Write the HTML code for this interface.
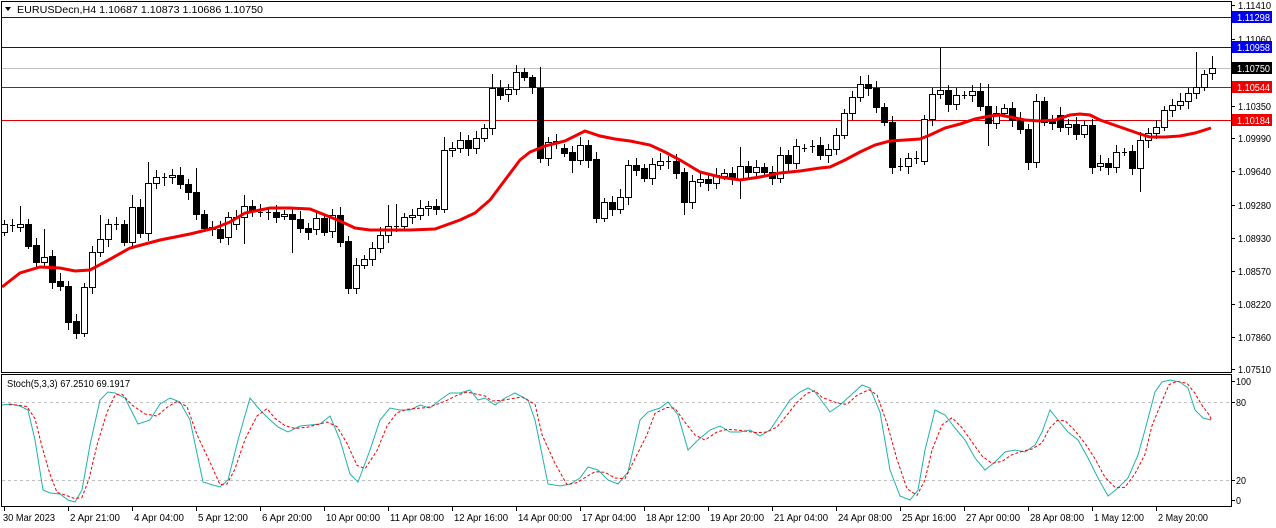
<!DOCTYPE html>
<html><head><meta charset="utf-8"><style>
html,body{margin:0;padding:0;background:#fff;width:1276px;height:528px;overflow:hidden}
svg{display:block;font-family:"Liberation Sans",Tahoma,sans-serif;font-size:10px}
</style></head><body>
<svg id="s" width="1276" height="528" xmlns="http://www.w3.org/2000/svg">
<rect width="1276" height="528" fill="#fff"/>
<g id="lines">
<line x1="2" y1="17.5" x2="1231" y2="17.5" stroke="#0000ff"/>
<line x1="2" y1="47.5" x2="1231" y2="47.5" stroke="#0000ff"/>
<line x1="2" y1="68.5" x2="1231" y2="68.5" stroke="#c0c0c0"/>
<line x1="2" y1="87.5" x2="1231" y2="87.5" stroke="#e00000"/>
<line x1="2" y1="120.5" x2="1231" y2="120.5" stroke="#e00000"/>
<line x1="2" y1="402.5" x2="1231" y2="402.5" stroke="#c0c0c0" stroke-dasharray="3,3"/>
<line x1="2" y1="480.5" x2="1231" y2="480.5" stroke="#c0c0c0" stroke-dasharray="3,3"/>
</g>
<g id="candles"></g>
<polyline id="ma" fill="none" stroke="#f00000" stroke-width="3"/>
<polyline id="st" fill="none" stroke="#20b2aa" stroke-width="1"/>
<polyline id="sg" fill="none" stroke="#f00000" stroke-width="1" stroke-dasharray="3,2"/>
<rect x="1.5" y="1.5" width="1230" height="371" fill="none" stroke="#000"/>
<rect x="1.5" y="374.5" width="1230" height="132" fill="none" stroke="#000"/>
<path d="M5 7 L11 7 L8 11 Z" fill="#000"/>
<text x="17" y="13" textLength="246" lengthAdjust="spacingAndGlyphs">EURUSDecn,H4  1.10687 1.10873 1.10686 1.10750</text>
<text x="7" y="387" textLength="123" lengthAdjust="spacingAndGlyphs">Stoch(5,3,3) 67.2510 69.1917</text>
<g id="axis"></g>
<g id="time"></g>
</svg>
<script>
var NS="http://www.w3.org/2000/svg";
function el(t,a,p,txt){var e=document.createElementNS(NS,t);for(var k in a)e.setAttribute(k,a[k]);if(txt!=null)e.textContent=txt;(p||document.getElementById('s')).appendChild(e);return e;}
var C=[[232,224],[225,225],[227,224,206],[224,246,0,249],[245,262],[262,257,229],[256,282],[281,286],[286,322],[321,333],[333,287],[287,252],[252,239,215],[239,224],[224,224],[224,242],[242,207,195],[207,233],[233,183,162],[183,177],[177,177,173,186],[177,175],[175,184],[184,192],[192,214,168],[214,228],[227,229],[229,238],[237,217],[224,217],[217,206,195,244],[206,210],[212,212],[212,212],[212,217],[216,214],[214,219,0,253],[219,228],[228,232],
[229,218],[218,232],[231,215],[215,242],[241,288,0,294],[288,265],[265,259],[259,248],[248,235],[235,226,205],[226,226,204],[226,217],[217,215],[215,208],[208,206],[206,209],[209,150,137],[150,148],[148,140],[140,148],[148,138],[138,128],[128,88,74],[88,95],[94,89],[89,72],[72,77],[77,87,75],[88,158,67],[158,142],[141,143],[148,153],[152,160,0,173],[160,145],[145,160],[159,218,0,223],[218,202],[202,209],
[209,197],[197,165],[165,170],[168,178],[178,164],[165,161],[161,161],[161,173],[172,202,0,215],[202,181],[182,179],[179,183],[183,175],[176,173],[173,178],[179,166,147,199],[166,172],[172,167],[167,172],[172,178],[178,155],[155,163],[163,146],[148,148],[146,146],[145,155],[155,149],[149,135],[135,113],[113,97],[97,84],[84,88,75],[88,107],[107,122],[122,167],[166,166],[166,158],[158,158],
[161,119],[119,94],[94,90,48],[90,104],[104,95],[95,95],[95,91],[91,106],[106,123,84,146],[123,113],[113,108],[108,120],[120,129],[129,162],[162,101],[101,122],[121,123],[115,127],[127,124],[124,134],[134,125],[125,167],[166,163],[163,167],[167,152],[152,152],[151,168],[168,140,0,192],[140,133],[133,127],[127,110],[110,105],[105,101],[101,93],[93,87,52],[87,74],[73,68,56]];
var g=document.getElementById('candles');
C.forEach(function(c,i){var x=4+8*i,o=c[0],cl=c[1];var t=Math.min(o,cl),b=Math.max(o,cl);
var h=c[2]||t-4-(i*7%5),l=c[3]||b+4+(i*3%5);
el('line',{x1:x+.5,y1:h,x2:x+.5,y2:l,stroke:'#000'},g);
if(b-t<1){el('line',{x1:x-2,y1:t+.5,x2:x+3,y2:t+.5,stroke:'#000'},g);}
else el('rect',{x:x-2.5,y:t+.5,width:6,height:b-t,fill:cl>o?'#000':'#fff',stroke:'#000'},g);});
var MA="2,287 20,273 40,267 60,268 75,271 90,270 105,262 130,248 160,240 190,234 215,228 230,222 245,213 270,208 290,208 310,209 340,221 355,228 370,230 410,230 435,229 460,220 475,213 490,200 505,180 520,160 530,152 545,146 565,141 585,131 600,136 615,139 630,141 650,145 665,152 680,160 700,172 720,177 740,180 760,177 780,173 800,171 820,168 830,167 845,160 860,152 875,145 890,141 920,139 930,135 945,128 960,124 975,119 990,116 1000,115 1010,117 1025,120 1040,121 1055,120 1070,115 1080,114 1090,115 1100,120 1120,127 1140,134 1150,137 1165,137 1180,136 1195,133 1211,128";
document.getElementById('ma').setAttribute('points',MA);
var ST=[[2,405],[10,404],[20,406],[28,410],[35,440],[43,490],[50,493],[60,494],[68,500],[75,502],[82,490],[90,445],[100,400],[108,392],[115,393],[125,398],[138,424],[150,420],[160,404],[170,398],[180,402],[190,420],[203,482],[213,485],[220,487],[228,480],[238,440],[250,398],[260,410],[268,418],[278,427],[288,432],[300,426],[320,424],[330,416],[340,440],[350,474],[358,482],[370,450],[380,420],[390,408],[400,410],[410,410],[420,405],[430,408],[440,400],[450,393],[460,393],[470,390],[478,400],[485,398],[495,405],[505,398],[515,393],[528,400],[535,420],[548,484],[560,486],[570,484],[580,478],[588,467],[598,470],[608,480],[618,484],[628,472],[640,420],[648,412],[660,408],[668,402],[678,415],[688,450],[698,440],[710,430],[720,426],[730,432],[740,432],[750,430],[760,436],[770,430],[780,415],[790,400],[800,392],[808,388],[815,392],[830,412],[840,405],[850,396],[862,385],[870,388],[880,412],[890,470],[900,496],[910,500],[918,490],[925,450],[935,410],[945,415],[955,428],[965,440],[975,458],[985,470],[995,462],[1005,452],[1015,450],[1025,452],[1035,445],[1042,432],[1050,410],[1058,420],[1068,432],[1078,440],[1088,458],[1098,478],[1108,496],[1118,488],[1128,478],[1138,455],[1145,430],[1155,392],[1162,382],[1170,380],[1180,382],[1188,388],[1195,410],[1203,418],[1211,420]];
document.getElementById('st').setAttribute('points',ST.map(function(p){return p.join(',')}).join(' '));
var SG=ST.map(function(p,i){var a=ST[Math.max(0,i-1)][1],b=p[1],c=ST[Math.min(ST.length-1,i+1)][1];return [Math.min(1211,p[0]+7),(a+b+c)/3];});
document.getElementById('sg').setAttribute('points',SG.map(function(p){return p.join(',')}).join(' '));
var ax=document.getElementById('axis');
function tx(x,y,s,w,p,fill){var a={x:x,y:y,textLength:w,lengthAdjust:'spacingAndGlyphs'};if(fill)a.fill=fill;return el('text',a,p,s);}
[["1.11410",5],["1.11060",39],["1.10350",106],["1.09990",138],["1.09640",171],["1.09280",205],["1.08930",238],["1.08570",271],["1.08220",304],["1.07860",337],["1.07510",369]].forEach(function(a){
el('line',{x1:1231,y1:a[1]+.5,x2:1235,y2:a[1]+.5,stroke:'#000'},ax);tx(1238,a[1]+4,a[0],33,ax);});
[["1.11298",17,"#0000f0"],["1.10958",47,"#0000f0"],["1.10750",68,"#000"],["1.10544",87,"#f00000"],["1.10184",120,"#f00000"]].forEach(function(a){
el('rect',{x:1232,y:a[1]-6,width:40,height:12,fill:a[2]},ax);tx(1237,a[1]+4,a[0],33,ax,'#fff');});
[["100",381,15],["80",402,10],["20",480,10],["0",500,5]].forEach(function(a){el('line',{x1:1231,y1:a[1]+.5,x2:1235,y2:a[1]+.5,stroke:'#000'},ax);tx(1236,a[1]+4,a[0],a[2],ax);});
var T=["30 Mar 2023","2 Apr 21:00","4 Apr 04:00","5 Apr 12:00","6 Apr 20:00","10 Apr 00:00","11 Apr 08:00","12 Apr 16:00","14 Apr 00:00","17 Apr 04:00","18 Apr 12:00","19 Apr 20:00","21 Apr 04:00","24 Apr 08:00","25 Apr 16:00","27 Apr 00:00","28 Apr 08:00","1 May 12:00","2 May 20:00"];
var tg=document.getElementById('time');
T.forEach(function(t,i){var x=4+64*i;el('line',{x1:x+.5,y1:507,x2:x+.5,y2:511,stroke:'#000'},tg);
var w=t.length>=12?54:(t.length==11?50:46);if(i==0)w=52;tx(i==0?3:x+2,521,t,w,tg);});
</script>
</body></html>
